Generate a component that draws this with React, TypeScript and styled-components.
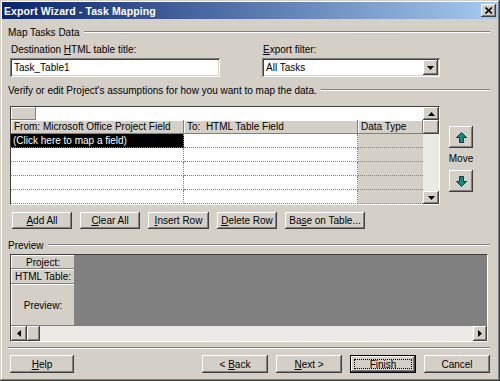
import React from 'react';
import styled, { createGlobalStyle, css } from 'styled-components';

const Global = createGlobalStyle`
  html, body { margin: 0; padding: 0; background: #d4d0c8; }
  body { font-family: "Liberation Sans", Arial, sans-serif; font-size: 10px; color: #000; }
  * { box-sizing: border-box; }
`;

const raised = css`
  box-shadow: inset -1px -1px #404040, inset 1px 1px #ffffff, inset -2px -2px #808080, inset 2px 2px #d4d0c8;
`;

const Window = styled.div`
  width: 500px;
  height: 381px;
  background: #d4d0c8;
  display: flex;
  flex-direction: column;
  padding: 2px;
  box-shadow: inset -1px -1px #404040, inset 1px 1px #d4d0c8, inset -2px -2px #808080, inset 2px 2px #ffffff;
`;

const TitleBar = styled.div`
  height: 17px;
  flex: none;
  display: flex;
  align-items: center;
  justify-content: space-between;
  padding: 0 2px 0 2px;
  background: linear-gradient(to right, #0a246a, #a6caf0);
`;

const TitleText = styled.span`
  color: #fff;
  font-weight: bold;
  font-size: 10.5px;
  letter-spacing: 0.1px;
`;

const CloseBtn = styled.div`
  width: 15px;
  height: 13px;
  background: #d4d0c8;
  display: flex;
  align-items: center;
  justify-content: center;
  ${raised};
`;

const Body = styled.div`
  flex: 1;
  display: flex;
  flex-direction: column;
  padding: 0 8px 0 6px;
`;

const GroupHeader = styled.div<{ $mt: number }>`
  display: flex;
  align-items: center;
  gap: 4px;
  height: 12px;
  margin-top: ${p => p.$mt}px;
  white-space: nowrap;
`;

const Etched = styled.div`
  flex: 1;
  height: 2px;
  border-top: 1px solid #808080;
  border-bottom: 1px solid #ffffff;
`;

const FieldsRow = styled.div`
  display: flex;
  margin-top: 6px;
`;

const Field = styled.div<{ $ml: number; $w: number }>`
  display: flex;
  flex-direction: column;
  margin-left: ${p => p.$ml}px;
  width: ${p => p.$w}px;
`;

const FieldLabel = styled.div`
  height: 12px;
  line-height: 12px;
  padding-left: 1px;
`;

const TextBox = styled.div`
  margin-top: 2px;
  height: 19px;
  background: #fff;
  display: flex;
  align-items: center;
  justify-content: space-between;
  padding: 0 2px 0 4px;
  box-shadow: inset 1px 1px #808080, inset -1px -1px #ffffff, inset 2px 2px #404040, inset -2px -2px #d4d0c8;
`;

const DropBtn = styled.div`
  width: 15px;
  height: 15px;
  background: #d4d0c8;
  display: flex;
  align-items: center;
  justify-content: center;
  ${raised};
`;

const GridArea = styled.div`
  display: flex;
  margin-top: 10px;
  padding-left: 2px;
`;

const Table = styled.div`
  width: 430px;
  height: 99px;
  display: flex;
  border: 1px solid;
  border-color: #404040 #ffffff #ffffff #404040;
  background: #fff;
`;

const TableContent = styled.div`
  width: 412px;
  display: flex;
  flex-direction: column;
`;

const EditRow = styled.div`
  height: 13px;
  display: flex;
  background: #fff;
`;

const CornerCell = styled.div`
  width: 25px;
  height: 13px;
  background: #d4d0c8;
  box-shadow: inset -1px -1px #808080, inset 1px 1px #ffffff;
`;

const Row = styled.div`
  display: grid;
  grid-template-columns: 173px 174px 65px;
  height: 14px;
`;

const HeadCell = styled.div`
  background: #d4d0c8;
  line-height: 14px;
  padding-left: 3px;
  white-space: nowrap;
  overflow: hidden;
  box-shadow: inset -1px -1px #808080, inset 1px 1px #ffffff;
`;

const Cell = styled.div<{ $gray?: boolean; $sel?: boolean; $last?: boolean }>`
  background: ${p => (p.$sel ? '#000' : p.$gray ? '#d4d0c8' : '#fff')};
  color: ${p => (p.$sel ? '#fff' : '#000')};
  line-height: 13px;
  padding-left: 2px;
  white-space: nowrap;
  border-bottom: 1px dotted #808080;
  border-right: ${p => (p.$last ? 'none' : '1px dotted #808080')};
`;

const VScroll = styled.div`
  width: 16px;
  display: flex;
  flex-direction: column;
  background: #eceae6;
`;

const ScrollBtn = styled.div<{ $w?: number; $h?: number }>`
  width: ${p => (p.$w ? `${p.$w}px` : 'auto')};
  height: ${p => (p.$h ? `${p.$h}px` : 'auto')};
  flex: none;
  background: #d4d0c8;
  display: flex;
  align-items: center;
  justify-content: center;
  ${raised};
`;

const Track = styled.div`
  flex: 1;
  background: #eceae6;
`;

const MoveCol = styled.div`
  width: 24px;
  margin-left: 9px;
  display: flex;
  flex-direction: column;
  align-items: center;
`;

const MoveBtn = styled.div<{ $mt: number }>`
  width: 24px;
  height: 22px;
  margin-top: ${p => p.$mt}px;
  background: #d4d0c8;
  display: flex;
  align-items: center;
  justify-content: center;
  ${raised};
`;

const MoveLabel = styled.div`
  margin-top: 5px;
  height: 12px;
  line-height: 12px;
`;

const ButtonRow = styled.div`
  display: flex;
  gap: 8px;
  margin-top: 7px;
  margin-left: 4px;
`;

const Button = styled.div<{ $w: number; $h?: number }>`
  width: ${p => p.$w}px;
  height: ${p => p.$h ?? 17}px;
  background: #d4d0c8;
  display: flex;
  align-items: center;
  justify-content: center;
  white-space: pre;
  ${raised};
`;

const DefaultButton = styled(Button)`
  position: relative;
  box-shadow: inset 0 0 0 1px #000, inset -2px -2px #404040, inset 2px 2px #ffffff, inset -3px -3px #808080;
  &::after {
    content: '';
    position: absolute;
    inset: 4px;
    border: 1px dotted #000;
  }
`;

const U = styled.span`
  text-decoration: underline;
  text-underline-offset: 1px;
`;

const PreviewBox = styled.div`
  margin-top: 3px;
  margin-left: 2px;
  width: 478px;
  height: 88px;
  display: flex;
  flex-direction: column;
  border: 1px solid;
  border-color: #404040 #ffffff #ffffff #404040;
`;

const PreviewTop = styled.div`
  height: 71px;
  display: flex;
`;

const LabelCol = styled.div`
  width: 64px;
  display: flex;
  flex-direction: column;
`;

const LabelCell = styled.div<{ $h?: number }>`
  height: ${p => (p.$h ? `${p.$h}px` : 'auto')};
  flex: ${p => (p.$h ? 'none' : '1')};
  background: #d4d0c8;
  display: flex;
  align-items: center;
  justify-content: center;
  white-space: nowrap;
  box-shadow: inset -1px -1px #808080, inset 1px 1px #ffffff;
`;

const PreviewCanvas = styled.div`
  flex: 1;
  background: #808080;
`;

const HScroll = styled.div`
  height: 15px;
  display: flex;
  background: #eceae6;
`;

const Separator = styled.div`
  margin-top: 5px;
  height: 2px;
  border-top: 1px solid #808080;
  border-bottom: 1px solid #ffffff;
`;

const FooterRow = styled.div`
  display: flex;
  margin-top: 6px;
  margin-left: 2px;
`;

const FooterRight = styled.div`
  margin-left: auto;
  display: flex;
  gap: 8px;
`;

const Tri = ({ dir }: { dir: 'up' | 'down' | 'left' | 'right' }) => {
  const pts = {
    up: '0,4 7,4 3.5,0',
    down: '0,0 7,0 3.5,4',
    left: '4,0 4,7 0,3.5',
    right: '0,0 0,7 4,3.5',
  }[dir];
  const vertical = dir === 'up' || dir === 'down';
  return (
    <svg width={vertical ? 7 : 4} height={vertical ? 4 : 7} viewBox={vertical ? '0 0 7 4' : '0 0 4 7'}>
      <polygon points={pts} fill="#000" />
    </svg>
  );
};

const MoveArrow = ({ down }: { down?: boolean }) => (
  <svg width="11" height="11" viewBox="0 0 11 11" style={down ? { transform: 'rotate(180deg)' } : undefined}>
    <polygon points="5.5,0.5 10.5,5.5 7.5,5.5 7.5,10.5 3.5,10.5 3.5,5.5 0.5,5.5" fill="#128a8a" stroke="#0b3b3b" strokeWidth="1" />
  </svg>
);

const rows = [0, 1, 2, 3, 4];

export default function App() {
  return (
    <>
      <Global />
      <Window>
        <TitleBar>
          <TitleText>Export Wizard - Task Mapping</TitleText>
          <CloseBtn>
            <svg width="8" height="7" viewBox="0 0 8 7">
              <path d="M0.5 0.5 L7 6.5 M7 0.5 L0.5 6.5" stroke="#000" strokeWidth="1.6" />
            </svg>
          </CloseBtn>
        </TitleBar>
        <Body>
          <GroupHeader $mt={7}>
            <span>Map Tasks Data</span>
            <Etched />
          </GroupHeader>
          <FieldsRow>
            <Field $ml={2} $w={210}>
              <FieldLabel>
                Destination <U>H</U>TML table title:
              </FieldLabel>
              <TextBox>Task_Table1</TextBox>
            </Field>
            <Field $ml={42} $w={178}>
              <FieldLabel>
                <U>E</U>xport filter:
              </FieldLabel>
              <TextBox>
                <span>All Tasks</span>
                <DropBtn>
                  <Tri dir="down" />
                </DropBtn>
              </TextBox>
            </Field>
          </FieldsRow>
          <GroupHeader $mt={7}>
            <span>Verify or edit Project's assumptions for how you want to map the data.</span>
            <Etched />
          </GroupHeader>
          <GridArea>
            <Table>
              <TableContent>
                <EditRow>
                  <CornerCell />
                </EditRow>
                <Row>
                  <HeadCell>From: Microsoft Office Project Field</HeadCell>
                  <HeadCell>To:&nbsp; HTML Table Field</HeadCell>
                  <HeadCell>Data Type</HeadCell>
                </Row>
                {rows.map(i => (
                  <Row key={i}>
                    <Cell $sel={i === 0}>{i === 0 ? '(Click here to map a field)' : ''}</Cell>
                    <Cell />
                    <Cell $gray $last />
                  </Row>
                ))}
              </TableContent>
              <VScroll>
                <ScrollBtn $h={13}>
                  <Tri dir="up" />
                </ScrollBtn>
                <ScrollBtn $h={14} />
                <Track />
                <ScrollBtn $h={13}>
                  <Tri dir="down" />
                </ScrollBtn>
              </VScroll>
            </Table>
            <MoveCol>
              <MoveBtn $mt={20}>
                <MoveArrow />
              </MoveBtn>
              <MoveLabel>Move</MoveLabel>
              <MoveBtn $mt={5}>
                <MoveArrow down />
              </MoveBtn>
            </MoveCol>
          </GridArea>
          <ButtonRow>
            <Button $w={60}>
              <U>A</U>dd All
            </Button>
            <Button $w={60}>
              <U>C</U>lear All
            </Button>
            <Button $w={61}>
              <U>I</U>nsert Row
            </Button>
            <Button $w={60}>
              <U>D</U>elete Row
            </Button>
            <Button $w={80}>
              Ba<U>s</U>e on Table...
            </Button>
          </ButtonRow>
          <GroupHeader $mt={10}>
            <span>Preview</span>
            <Etched />
          </GroupHeader>
          <PreviewBox>
            <PreviewTop>
              <LabelCol>
                <LabelCell $h={14}>Project:</LabelCell>
                <LabelCell $h={15}>HTML Table:</LabelCell>
                <LabelCell>Preview:</LabelCell>
              </LabelCol>
              <PreviewCanvas />
            </PreviewTop>
            <HScroll>
              <ScrollBtn $w={16}>
                <Tri dir="left" />
              </ScrollBtn>
              <ScrollBtn $w={13} />
              <Track />
              <ScrollBtn $w={14}>
                <Tri dir="right" />
              </ScrollBtn>
            </HScroll>
          </PreviewBox>
          <Separator />
          <FooterRow>
            <Button $w={64} $h={18}>
              <U>H</U>elp
            </Button>
            <FooterRight>
              <Button $w={66} $h={18}>
                {'< '}
                <U>B</U>ack
              </Button>
              <Button $w={66} $h={18}>
                <U>N</U>ext{' >'}
              </Button>
              <DefaultButton $w={66} $h={18}>
                Finish
              </DefaultButton>
              <Button $w={66} $h={18}>
                Cancel
              </Button>
            </FooterRight>
          </FooterRow>
        </Body>
      </Window>
    </>
  );
}
